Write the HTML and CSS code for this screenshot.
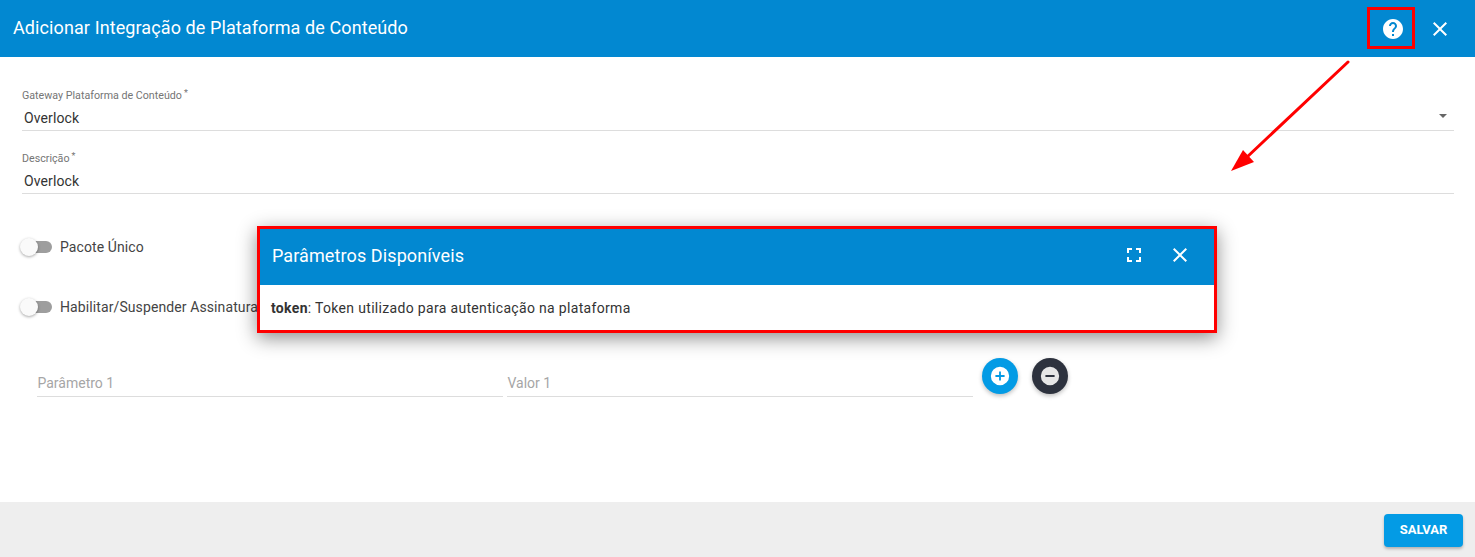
FILE: index.html
```html
<!DOCTYPE html>
<html lang="pt-BR">
<head>
<meta charset="utf-8">
<title>Adicionar Integração de Plataforma de Conteúdo</title>
<link rel="stylesheet" href="styles.css">
</head>
<body>
<div class="dialog">
  <header class="topbar">
    <h1 class="topbar-title">Adicionar Integração de Plataforma de Conteúdo</h1>
    <span class="help-icon">
      <svg width="24" height="24" viewBox="0 0 24 24"><path fill="#fff" d="M12 2C6.48 2 2 6.48 2 12s4.480 10 10 10 10-4.480 10-10S17.520 2 12 2zm1 17h-2v-2h2v2zm2.070-7.750l-.9.920C13.450 12.900 13 13.500 13 15h-2v-.5c0-1.100.45-2.100 1.170-2.830l1.240-1.260c.37-.36.59-.86.59-1.410 0-1.100-.9-2-2-2s-2 .9-2 2H8c0-2.210 1.790-4 4-4s4 1.790 4 4c0 .88-.36 1.680-.93 2.250z"/></svg>
    </span>
    <span class="close-icon">
      <svg width="24" height="24" viewBox="0 0 24 24"><path fill="#fff" d="M19 6.410 17.590 5 12 10.590 6.410 5 5 6.410 10.590 12 5 17.590 6.410 19 12 13.410 17.590 19 19 17.590 13.410 12z"/></svg>
    </span>
  </header>

  <main class="content">
    <div class="field field-select">
      <label class="field-label">Gateway Plataforma de Conteúdo<sup class="req">*</sup></label>
      <div class="field-value">Overlock<span class="caret"></span></div>
    </div>
    <div class="field field-second">
      <label class="field-label">Descrição<sup class="req">*</sup></label>
      <div class="field-value">Overlock</div>
    </div>

    <div class="toggle-row toggle-first">
      <span class="toggle"><span class="toggle-track"></span><span class="toggle-thumb"></span></span>
      <span class="toggle-label">Pacote Único</span>
    </div>
    <div class="toggle-row toggle-second">
      <span class="toggle"><span class="toggle-track"></span><span class="toggle-thumb"></span></span>
      <span class="toggle-label">Habilitar/Suspender Assinatura</span>
    </div>

    <div class="params">
      <div class="param-input">Parâmetro 1</div>
      <div class="param-input">Valor 1</div>
      <button class="round-btn round-add" type="button">
        <svg width="22" height="22" viewBox="0 0 24 24"><path fill="#fff" fill-rule="evenodd" d="M12 2a10 10 0 1 0 0 20 10 10 0 0 0 0-20zm1 5h-2v4H7v2h4v4h2v-4h4v-2h-4z"/></svg>
      </button>
      <button class="round-btn round-remove" type="button">
        <svg width="22" height="22" viewBox="0 0 24 24"><path fill="#e6e6e6" fill-rule="evenodd" d="M12 2a10 10 0 1 0 0 20 10 10 0 0 0 0-20zm5 9H7v2h10z"/></svg>
      </button>
    </div>
  </main>

  <footer class="footer">
    <button class="save-btn" type="button">SALVAR</button>
  </footer>
</div>

<section class="popup">
  <div class="popup-head">
    <h2 class="popup-title">Parâmetros Disponíveis</h2>
    <svg class="popup-expand" width="24" height="24" viewBox="0 0 24 24"><path fill="#fff" d="M5 5h5v2H7v3H5zM14 5h5v5h-2V7h-3zM5 14h2v3h3v2H5zM17 14h2v5h-5v-2h3z"/></svg>
    <svg class="popup-close" width="24" height="24" viewBox="0 0 24 24"><path fill="#fff" d="M19 6.410 17.590 5 12 10.590 6.410 5 5 6.410 10.590 12 5 17.590 6.410 19 12 13.410 17.590 19 19 17.590 13.410 12z"/></svg>
  </div>
  <div class="popup-body"><strong>token</strong>: Token utilizado para autenticação na plataforma</div>
</section>

<div class="help-outline"></div>
<svg class="arrow" width="130" height="115" viewBox="0 0 130 115">
  <line x1="118" y1="3" x2="16" y2="99" stroke="#f00" stroke-width="3" stroke-linecap="round"/>
  <polygon points="1,112 13,91 24,103" fill="#f00"/>
</svg>
</body>
</html>
```

FILE: styles.css
```css
* { box-sizing: border-box; }
html, body { margin: 0; height: 100%; }
body {
  width: 1475px;
  height: 557px;
  overflow: hidden;
  position: relative;
  background: #fff;
  font-family: Roboto, sans-serif;
  color: #333;
}
.dialog { display: flex; flex-direction: column; height: 557px; }
.topbar {
  height: 57px;
  flex: none;
  background: #0288d1;
  display: flex;
  align-items: center;
  padding: 0 23px 0 13px;
  color: #fff;
}
.topbar-title { margin: 0 0 2px; flex: 1; font-size: 18px; font-weight: 400; letter-spacing: 0.1px; }
.help-icon { display: flex; margin-right: 23px; }
.close-icon { display: flex; }
.content { flex: 1; padding: 0 21px 0 22px; position: relative; }
.field { border-bottom: 1px solid #ddd; }
.field-select { margin-top: 32px; height: 42px; }
.field-second { margin-top: 21px; height: 42px; }
.field-label { display: block; font-size: 10.7px; line-height: 13px; color: #757575; }
.req { font-size: 9px; line-height: 0; margin-left: 2px; vertical-align: 3px; }
.field-value {
  position: relative;
  margin-top: 7px;
  padding-left: 2px;
  font-size: 14px;
  line-height: 18px;
  color: #333;
  letter-spacing: 0.12px;
}
.caret {
  position: absolute;
  right: 7px;
  top: 5px;
  border-left: 4px solid transparent;
  border-right: 4px solid transparent;
  border-top: 4px solid #666;
}
.toggle-row { display: flex; align-items: center; height: 20px; }
.toggle-first { margin-top: 43px; }
.toggle-second { margin-top: 40px; }
.toggle { position: relative; width: 30px; height: 20px; margin-right: 8px; flex: none; }
.toggle-track {
  position: absolute;
  left: 2px;
  top: 4px;
  width: 28px;
  height: 12px;
  border-radius: 6px;
  background: #9e9e9e;
}
.toggle-thumb {
  position: absolute;
  left: -2px;
  top: 1px;
  width: 18px;
  height: 18px;
  border-radius: 50%;
  background: #fafafa;
  box-shadow: 0 1px 3px rgba(0,0,0,0.35);
}
.toggle-label { font-size: 14px; color: #444; letter-spacing: 0.1px; white-space: nowrap; }
.params { display: flex; align-items: flex-start; margin-top: 41px; padding-left: 15px; }
.param-input {
  width: 466px;
  height: 27px;
  margin: 12px 4px 0 0;
  border-bottom: 1px solid #ddd;
  font-size: 14px;
  line-height: 22px;
  padding: 2px 0 0 0.5px;
  color: #a6a6a6;
}
.round-btn {
  width: 36px;
  height: 36px;
  padding: 0;
  border: 0;
  border-radius: 50%;
  display: flex;
  align-items: center;
  justify-content: center;
  box-shadow: 0 2px 4px rgba(0,0,0,0.25);
}
.round-add { background: #039be5; margin-left: 5px; }
.round-remove { background: #2d323e; margin-left: 14px; }
.footer {
  height: 55px;
  flex: none;
  background: #eeeeee;
  display: flex;
  align-items: flex-start;
  justify-content: flex-end;
  padding: 12px 12px 0 0;
}
.save-btn {
  width: 79px;
  height: 33px;
  border: 0;
  border-radius: 4px;
  background: #039be5;
  color: #fff;
  font-family: Roboto, sans-serif;
  font-size: 13px;
  font-weight: 700;
  padding: 0 0 2px;
  box-shadow: 0 2px 3px rgba(0,0,0,0.25);
}
.popup {
  position: absolute;
  left: 257px;
  top: 226px;
  width: 960px;
  height: 107px;
  border: 3px solid #f00;
  background: #fff;
  box-shadow: 0 5px 18px rgba(0,0,0,0.45);
}
.popup-head {
  height: 56px;
  background: #0288d1;
  display: flex;
  align-items: center;
  padding: 0 22px 4px 12px;
  color: #fff;
}
.popup-title { margin: 0; flex: 1; font-size: 18px; font-weight: 400; letter-spacing: 0.1px; }
.popup-expand { margin-right: 22px; }
.popup-body { padding: 14px 11px; font-size: 14px; line-height: 18px; color: #333; letter-spacing: 0.32px; }
.help-outline {
  position: absolute;
  left: 1367px;
  top: 7px;
  width: 48px;
  height: 42px;
  border: 3px solid #f00;
}
.arrow { position: absolute; left: 1230px; top: 59px; }
```
